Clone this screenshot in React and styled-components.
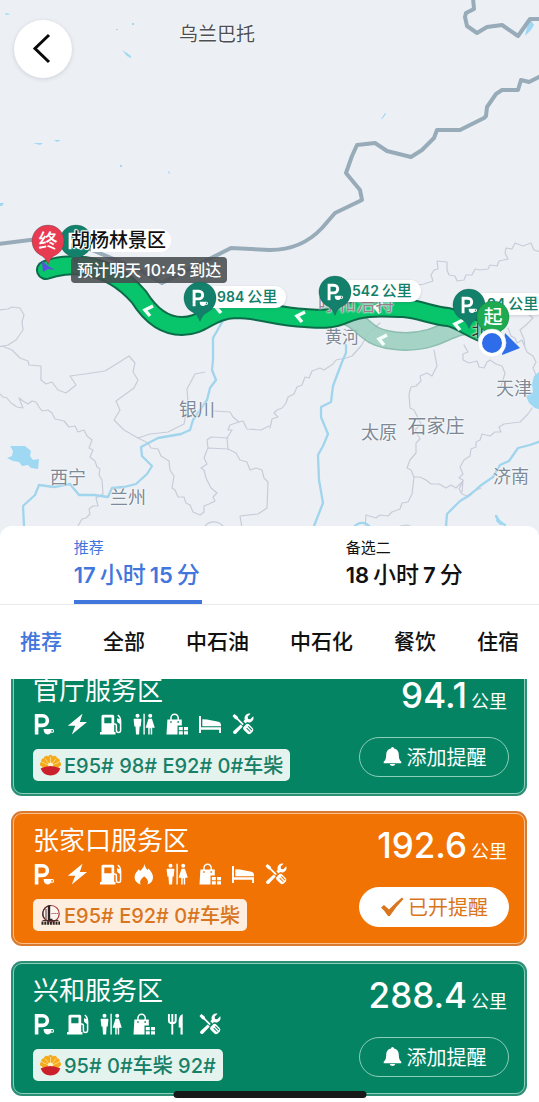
import React, { useLayoutEffect, useRef, useState } from 'react';
import styled, { createGlobalStyle, css } from 'styled-components';

const GlobalStyle = createGlobalStyle`
*, *::before, *::after {
  box-sizing: border-box;
}
body {
  margin: 0;
  background: #fff;
  font-family: Inter, "Noto Sans CJK SC", sans-serif;
  color: #111;
}
button {
  font: inherit;
  color: inherit;
  background: none;
  border: 0;
  padding: 0;
  cursor: pointer;
}
`

const Page = styled.main`
display: flex;
flex-direction: column;
height: 100vh;
overflow: hidden;
`

/* ---------- map ---------- */

const MapArea = styled.section`
position: relative;
flex: 0 0 49vh;
overflow: hidden;
background: #ecf0f4;
`
const MapLayer = styled.svg`
position: absolute;
left: 0;
top: 0;
width: 539px;
height: 540px;
fill: none;
stroke-linecap: round;
stroke-linejoin: round;
`
const BackButton = styled.button`
position: absolute;
left: 14px;
top: 20px;
display: grid;
place-items: center;
width: 58px;
height: 58px;
border-radius: 50%;
background: #fff;
box-shadow: 0 1px 4px rgba(60, 70, 90, .18);
`
const Place = styled.span`
position: absolute;
left: ${(props) => props.$x}px;
top: ${(props) => props.$y}px;
transform: translate(-50%, -50%);
font-size: ${(props) => props.$size || 18}px;
line-height: 1;
white-space: nowrap;
color: ${(props) => props.$color || '#7d8996'};
text-shadow: 0 0 2px #fff, 0 0 2px #fff;
`
const Pin = styled.svg`
position: absolute;
left: ${(props) => props.$x - 17}px;
top: ${(props) => props.$y - 17}px;
width: 34px;
height: 42px;
`
const PinText = styled.text`
font-size: 19px;
font-weight: 500;
fill: #fff;
text-anchor: middle;
`
const DistancePill = styled.span`
position: absolute;
left: ${(props) => props.$x}px;
top: ${(props) => props.$y}px;
height: 22px;
padding: 0 9px 0 17px;
border-radius: 11px;
background: #fff;
box-shadow: 0 1px 3px rgba(60, 70, 90, .2);
color: #12806a;
font-size: 15px;
font-weight: 500;
line-height: 22px;
white-space: nowrap;
b {
  margin-right: 3px;
  font-size: 14px;
  font-weight: 600;
}
`
const Destination = styled.span`
position: absolute;
left: 71px;
top: 229px;
padding-right: 5px;
border-radius: 0 11px 11px 0;
background: linear-gradient(90deg, transparent 20px, #fff 20px);
color: #111;
font-size: 19px;
font-weight: 500;
line-height: 23px;
white-space: nowrap;
text-shadow: 1px 0 #fff, -1px 0 #fff, 0 1px #fff, 0 -1px #fff, 1px 1px 1px #fff, -1px -1px 1px #fff;
`
const Arrival = styled.span`
position: absolute;
left: 71px;
top: 257px;
padding: 0 6px;
border-radius: 4px;
background: rgba(72, 76, 80, .88);
color: #fff;
font-size: 16px;
font-weight: 500;
line-height: 26px;
white-space: nowrap;
b {
  margin: 0 3px;
  font-weight: 500;
}
`

const BORDERS = [
  'M473-2 474 9 466 13 465 17 467 26 477 33 487 27 502 25 518 36 530 19 541 19',
  'M541 76 529 82 521 80 518 90 502 90 496 94 487 107 486 116 484 118 460 130 437 130 434 138 422 150 411 157 387 151 375 143 357 145 352 156 346 173 360 190 362 200 335 213 322 228C308 243 292 250 270 250L231 248 162 283 140 270 80 245 48 239 30 240-2 244',
]

const PROVINCES = [
  'M-2 310 8 309 12 307 20 308 24 315 22 322 23 330 16 340 8 345-2 347M2 346 12 350 20 358 28 361 29 365 41 366 41 380 46 384 52 382 58 390 66 393 76 385 70 376 85 374 105 371 118 363 129 356 135 363 133 372 138 380 134 388 116 401 120 410 114 420 124 430 138 438 150 434 168 432 184 424 188 402 187 389 195 374 205 372',
  'M-2 392 3 397 7 398 11 403 17 407 23 408 21 403 19 398 23 401 28 404 32 401 36 402 39 407 42 411 48 410 52 413 55 419 64 421 69 427 75 426 78 432 84 430 87 436 92 440 89 448 93 450 90 457 95 461 97 467 100 469 99 475 102 480 103 494 96 498 98 506 93 506 89 509 90 514 86 518 82 519 78 526',
  'M138 438 148 443 151 448 158 449 161 456 169 461 170 470 174 476 172 488 175 490 178 497 184 497 186 503 190 505 193 512 200 515 204 512 204 506 209 504 215 501 213 497 217 493 211 488 206 478 204 470 201 468 207 464 204 458 207 450 208 448 228 449 227 438 232 430 228 430 230 425 239 422',
  'M214 411 230 412 233 417 239 422 243 421 247 429 261 430 269 426M208 448 207 440 211 437 228 438M228 449 236 453 240 460 247 462 250 470 256 468 262 470 264 478 268 482 267 508 258 514 240 516 242 528',
  'M270 428 272 419 278 417 274 413 277 410 282 408 286 403 288 397 294 394 297 387 302 385 305 377 309 378 312 371 320 368 324 370 333 364 336 360 346 358 352 356 361 346 368 334 380 323',
  'M418 285 424 284 433 281 431 275 434 270 438 269 437 261 447 262 447 270 449 275 455 276 457 281 464 280 466 275 472 275 475 269 480 270 488 269 490 265 497 266 499 261 508 259 505 253 506 248 512 249 515 243 523 246 531 243 534 250 541 252',
  'M434 350 437 366 432 376 427 373 420 376 421 381 416 386 411 387 409 394 410 408 414 410 417 416 421 424 415 430 420 439 416 443 416 453 410 460 407 468 411 470 414 477 420 477 426 480 431 484 439 484 446 488 451 485 456 488 463 481 459 489 462 494 467 496 474 491 481 488',
  'M464 345 468 352 463 354 463 360 469 363 477 361 479 367 484 368 487 362 490 360 496 364 502 366 505 373 503 380 501 386',
  'M508 328 511 336 515 338 517 343 522 340 527 352 533 356 536 362 533 368 536 375M525 348 524 339 520 330 526 325 533 318 528 314 530 306 537 296',
  'M414 477 412 494 408 502 402 503 400 509 392 512 388 516 380 515 376 518 366 515 365 528',
  'M532 408 528 414 520 422 504 424 499 427 501 432 495 432 490 436 482 434 480 440 476 442 476 447 471 449 470 456 464 460 460 467 463 474 459 478 463 480 462 492',
  'M205 526C210 520 218 521 223 526M400 526 407 525 410 526',
]

const RIVERS = [
  'M225 317 221 324 213 338 213 360 212 370 216 380 210 388 207 400 200 410 193 420 190 430 181 434 158 438 141 447 142 456 152 466 147 474 136 484 124 487 112 488 108 497 94 495 79 495 70 484 54 487 39 485 35 495 23 506 24 526',
  'M346 345 346 353 342 362 333 386 331 402 321 407 321 417 328 434 323 446 318 455 319 480 323 503 314 526',
  'M541 441 530 445 518 448 509 461 500 465 493 477 480 486 470 495 460 501 447 514 446 526',
  'M354 527C359 521 366 522 370 527M496 516 499 522 505 525',
]

const ROUTE = 'M46 270C56 266 72 264 84 266 108 269 126 282 139 297 149 313 162 326 182 326 204 326 209 310 236 309 260 309 276 317 305 318 322 319 332 320 345 314 365 305 385 308 403 308 420 309 432 316 448 317 463 320 470 330 492 336'
const ALT_ROUTE = 'M330 312C352 314 360 325 368 331 380 342 410 344 430 338 447 333 454 325 478 324'

const CHEVRONS = [[148, 311], [219, 308], [300, 317], [378, 308], [458, 325], [382, 340]]

const PLACES = [
  { name: '乌兰巴托', x: 217, y: 34, size: 19, color: '#4c4f53' },
  { name: '黄河', x: 342, y: 337, size: 17 },
  { name: '银川', x: 197, y: 410 },
  { name: '西宁', x: 68, y: 478 },
  { name: '兰州', x: 128, y: 498 },
  { name: '太原', x: 379, y: 433 },
  { name: '石家庄', x: 436, y: 426, size: 19 },
  { name: '天津', x: 514, y: 389 },
  { name: '济南', x: 511, y: 477 },
]

const ParkingShape = () => (
  <>
    <path d="M2.600 21.500V2.800h6a4.800 4.800 0 0 1 0 9.600h-6" fill="none" stroke="currentColor" strokeWidth="3.600" strokeLinecap="butt" strokeLinejoin="miter" />
    <path fillRule="evenodd" d="M9.600 16h8.600a1.900 1.900 0 0 1 0 3.800h-1.400q-1 1.600-3 1.600-4.200 0-4.200-5.400zM17.400 17v1.800h.7a.9.9 0 0 0 0-1.800z" fill="currentColor" />
  </>
)

const MapPin = ({ x, y, color, text }) => (
  <Pin viewBox="0 0 34 42" $x={x} $y={y}>
    <path d="M17 1a16 16 0 0 1 8 29.900c-4 2-6 4.200-8 9.600-2-5.400-4-7.600-8-9.600A16 16 0 0 1 17 1z" fill={color} stroke="rgba(20, 90, 75, .3)" />
    {text
      ? <PinText x="17" y="24">{text}</PinText>
      : <g color="#fff" transform="translate(9 8) scale(.8)"><ParkingShape /></g>}
  </Pin>
)

const RouteMap = () => (
  <MapArea aria-label="路线地图">
    <MapLayer viewBox="0 0 539 540">
      <g stroke="#c8ccd9" strokeWidth="1.200">
        {PROVINCES.map((d) => <path key={d} d={d} />)}
      </g>
      <g stroke="#a1d4ed" strokeWidth="2.300">
        {RIVERS.map((d) => <path key={d} d={d} />)}
      </g>
      <g fill="#9fd8f3">
        <path d="M10 446h15l6 5-1 5 3 4 6-1-1 10-7-1-3-3-6 1-3-4-6-1-6-3 5-2 1-5z" />
        <path d="M541 370l-7 6-2 8 1 8-7 4 3 7 6 5 6 2z" />
        <path d="M527 27l4-7 3 5-3 5-6 6z" />
        <path d="M122 50l5 3 4 3v2l-4-2zM5 13l6 1-5 1zM33 143h10l-3 2zM54 140h7l-4 2zM0 203h4l-2 3H0zM132 23h2v2h-2zM116 29h2v1h-2zM120 165h2v2h-2zM168 171h1l1 3h-1zM381 119l4-6 1 1-4 5zM497 515l3 5 5 4-5 1-4-4z" />
      </g>
      <g stroke="#98abb9" strokeWidth="4">
        {BORDERS.map((d) => <path key={d} d={d} />)}
      </g>
    </MapLayer>
    {PLACES.map((p) => (
      <Place key={p.name} $x={p.x} $y={p.y} $size={p.size} $color={p.color}>{p.name}</Place>
    ))}
    <MapLayer viewBox="0 0 539 540">
      <g opacity=".9">
        <path d={ALT_ROUTE} stroke="#83b9a8" strokeWidth="19" />
        <path d={ALT_ROUTE} stroke="#9ed0c1" strokeWidth="16" />
      </g>
      <path d={ROUTE} stroke="#0d6b49" strokeWidth="20" />
      <path d={ROUTE} stroke="#08c56c" strokeWidth="16" />
      <path d="M42 261l6 5 7 4-7-1-5 3z" fill="#5a50e0" />
      {CHEVRONS.map(([x, y]) => (
        <path key={x} d={`M${x + 5} ${y - 5}l-8 4 5 6`} stroke="#f4fff9" strokeWidth="3.500" strokeLinecap="butt" strokeLinejoin="miter" />
      ))}
    </MapLayer>
    <Place $x={356} $y={304} $size={19} $color="#9a7f8b">呼和浩特</Place>
    <MapPin x={76} y={241} color="#12806a" />
    <Destination>胡杨林景区</Destination>
    <Arrival>预计明天<b>10:45</b>到达</Arrival>
    <MapPin x={48} y={241} color="#e83a51" text="终" />
    <DistancePill $x={200} $y={286}><b>984</b>公里</DistancePill>
    <MapPin x={200} y={298} color="#12806a" />
    <DistancePill $x={335} $y={280}><b>542</b>公里</DistancePill>
    <MapPin x={335} y={292} color="#12806a" />
    <Place $x={480} $y={331} $size={17} $color="#333">北</Place>
    <DistancePill $x={470} $y={293}><b>94</b>公里</DistancePill>
    <MapPin x={469} y={305} color="#12806a" />
    <MapPin x={493} y={317} color="#1eaa50" text="起" />
    <MapLayer viewBox="0 0 539 540">
      <path d="M505 333l15 15-18 7z" fill="#2f6fe8" />
      <circle cx="492" cy="343" r="14" fill="#fff" stroke="#d8dfe6" strokeWidth=".5" />
      <circle cx="492" cy="343" r="10" fill="#2e6cea" />
    </MapLayer>
    <BackButton type="button" aria-label="返回">
      <svg width="58" height="58" viewBox="0 0 58 58" fill="none" stroke="#0a0a0a" strokeWidth="3">
        <path d="M35 15 21 28.500 35 42" />
      </svg>
    </BackButton>
  </MapArea>
)

/* ---------- sheet ---------- */

const Sheet = styled.section`
position: relative;
display: flex;
flex: 1;
flex-direction: column;
min-height: 0;
margin-top: -14px;
border-radius: 12px 12px 0 0;
background: #fff;
`
const RouteTabs = styled.div`
display: grid;
grid-template-columns: 1fr 1fr;
justify-items: center;
padding-left: 4px;
border-bottom: 1px solid #e9eaec;
`
const RouteTab = styled.button`
display: flex;
flex-direction: column;
height: 78px;
padding-top: 12px;
border-bottom: 4px solid ${(props) => (props.$active ? '#4176dc' : 'transparent')};
color: ${(props) => (props.$active ? '#4176dc' : '#111')};
text-align: left;
`
const RouteName = styled.span`
font-size: 15px;
line-height: 20px;
`
const RouteTime = styled.span`
padding-right: 2px;
font-size: 23px;
font-weight: 500;
line-height: 34px;
b {
  font-size: 22px;
  font-weight: 600;
}
b + span {
  margin: 0 4px;
}
b + span:last-child {
  margin-right: 0;
}
`
const Filters = styled.nav`
display: flex;
justify-content: space-between;
padding: 0 20px;
`
const Filter = styled.button`
font-size: 21px;
font-weight: 500;
line-height: 74px;
white-space: nowrap;
color: ${(props) => (props.$active ? '#4176dc' : '#111')};
`
const List = styled.ul`
display: flex;
flex: 1;
flex-direction: column;
gap: 15px;
min-height: 0;
margin: 0;
padding: 0 12px 7px 11px;
overflow-y: auto;
list-style: none;
scrollbar-width: none;
`
const themes = {
  green: css`
  --main: #058463;
  --edge: #2b8f76;
  --line: #8bceb9;
  --badge: #e5f3ef;
  --badge-text: #178066;
  `,
  orange: css`
  --main: #f07304;
  --edge: #d87a30;
  --line: #fbc18c;
  --badge: #fdeee0;
  --badge-text: #d9761d;
  `,
}
const Card = styled.li`
${(props) => themes[props.$tone]}
flex: none;
padding: 2px;
border-radius: 11px;
background: var(--edge);
`
const CardBody = styled.div`
display: flex;
justify-content: space-between;
height: 131px;
padding: 8px 15px 0 19px;
border: 1px solid var(--line);
border-radius: 9px;
background: var(--main);
color: #fff;
`
const Info = styled.div`
display: flex;
flex-direction: column;
align-items: flex-start;
`
const Title = styled.h2`
margin: 0;
font-size: 26px;
font-weight: 400;
line-height: 37px;
`
const Icons = styled.div`
display: flex;
gap: 11px;
margin-top: 4px;
padding-left: 1px;
svg {
  width: 22px;
  height: 22px;
}
`
const Fuel = styled.p`
display: flex;
align-items: center;
gap: 3px;
height: 32px;
margin: 14px 0 0;
padding: 0 7px;
border-radius: 5px;
background: var(--badge);
color: var(--badge-text);
font-size: 20px;
font-weight: 500;
white-space: nowrap;
svg {
  width: 21px;
  height: 22px;
}
`
const Side = styled.div`
display: flex;
flex-direction: column;
align-items: flex-end;
justify-content: space-between;
height: 105px;
`
const Distance = styled.p`
display: flex;
align-items: baseline;
gap: 4px;
margin: 0;
padding-right: 2px;
font-size: 18px;
line-height: 46px;
b {
  font-size: 35px;
  font-weight: 500;
}
`
const Remind = styled.button`
display: flex;
align-items: center;
justify-content: center;
gap: 4px;
width: 150px;
height: 40px;
border: 1px solid ${(props) => (props.$on ? '#fff' : 'var(--line)')};
border-radius: 20px;
background: ${(props) => (props.$on ? '#fff' : 'transparent')};
color: ${(props) => (props.$on ? 'var(--badge-text)' : '#fff')};
font-size: 20px;
`
const HomeBar = styled.div`
position: fixed;
left: 50%;
bottom: 4px;
width: 193px;
height: 7px;
border-radius: 4px;
background: #171a19;
transform: translateX(-50%);
`

const Icon = ({ children }) => (
  <svg viewBox="0 0 22 22" fill="currentColor" aria-hidden="true">{children}</svg>
)

const icons = {
  parking: <Icon><ParkingShape /></Icon>,
  charge: <Icon><path d="M15.500.800.800 12.700h7.400l-3.400 8.800L20 9h-7.200z" /></Icon>,
  fuel: (
    <Icon>
      <path fillRule="evenodd" d="M3 1.800h9.700q1.500 0 1.500 1.500V19h1.300v2.500H0V19h1.500V3.300Q1.500 1.800 3 1.800zM4.300 4.500v5.800h7.200V4.500z" />
      <path d="M14 11h.8q1.600 0 1.600 1.600v4.600c0 3 4.200 3 4.200 0V8.200c0-2.600-.8-4.700-2.800-6.200" fill="none" stroke="currentColor" strokeWidth="1.500" />
      <path d="M17 5.200l4 1.300v5l-2.600-1.400q-1.400-.8-1.400-2z" />
    </Icon>
  ),
  fire: (
    <Icon>
      <path d="M11.600.8c.4 3 1.400 4.600 3 6.200l1-1.600c2.500 3.200 4.400 5.500 4.400 8.800 0 3.800-2.500 6.300-5.600 7.200 1.400-2.700.6-4.800-3.200-8.200-3.900 3.400-4.800 5.500-3.400 8.200C4.200 20.500 1.600 18 1.600 14.300c0-3.500 2.300-5.600 4.200-8l1.300 1.700C9.700 5.900 11.300 3.600 11.600.8z" />
    </Icon>
  ),
  toilet: (
    <Icon>
      <circle cx="4.500" cy="2.800" r="2" />
      <path d="M1.300 5.800h6.400q.7 0 .7.800l-.7 6.800-1.100.2-.5 7.900H3l-.5-7.900-1.100-.2-.8-6.800q0-.8.700-.8z" />
      <path d="M10.400.8h1.400v20.700h-1.400z" />
      <circle cx="17.200" cy="2.800" r="2" />
      <path d="M15.500 5.800h3.400l2.900 9h-2.600v6.700h-1.500v-6.200h-1v6.200h-1.500v-6.700h-2.600z" />
    </Icon>
  ),
  shop: (
    <Icon>
      <path d="M5 7V4.800a3.600 3.600 0 0 1 7.200 0V7" fill="none" stroke="currentColor" strokeWidth="1.500" />
      <path fillRule="evenodd" d="M1.400 6.500h14.400v6h-4.300v9H.5zM4.200 8.200v1.500h1.500V8.200zm7.200 0v1.500H13V8.200z" />
      <path d="M12.800 14h4v3.200h-4zM18 14h4v3.200h-4zM12.800 18.300h4v3.200h-4zM18 18.300h4v3.200h-4z" />
    </Icon>
  ),
  bed: (
    <Icon>
      <path d="M0 3h2v11.200h20V20h-1.900v-3.300H2V20H0z" />
      <path d="M3.300 6.200 8 6.500l11.500 2.300q2.500.6 2.500 3v1.400H3.300z" />
    </Icon>
  ),
  food: (
    <Icon>
      <path d="M2.900 1v6.500q0 2.800 3.400 2.800t3.400-2.800V1M6.300 1v20.500" fill="none" stroke="currentColor" strokeWidth="1.900" />
      <path d="M16.700.9v20.600h-2.200v-7h-1.800V7.500q.3-5.200 4-6.600z" />
    </Icon>
  ),
  repair: (
    <Icon>
      <path d="M.5 3 2.400 1.100l3.200 2.300.7 2 5.500 5.500-1.300 1.300L5 6.700l-2-.7z" />
      <path fillRule="evenodd" d="M11.300 14.200l3.200-3.100q1.500-.7 2.700.5l3.600 3.600q1.200 1.500 0 3.400l-2 2q-1.900 1.200-3.400 0l-3.600-3.600q-1.200-1.300-.5-2.800zM14.300 15.500l3.600 3.600.7-.7-3.600-3.600zM16 13.800l3.600 3.600.7-.7-3.600-3.600z" />
      <path d="M18.600.7 15.700 3.600l.3 2.300 2.300.3 2.900-2.900c1 2.600-.3 5.200-2.700 6-1.400.4-2.500.2-3.400-.2l-1.500 1.500-2.300-2.300 1.500-1.500c-1.300-3.400 1.900-7.300 5.800-6.100zM8.700 11.500l2.100 2.100-6.600 6.800q-1.300 1.100-2.600.1-1.100-1.300 0-2.600z" />
    </Icon>
  ),
}

const PetroChina = () => (
  <svg viewBox="0 0 21 22" aria-hidden="true">
    <circle cx="10.500" cy="11" r="8.700" fill="#f5a91c" />
    {[-80, -55, -30, 0, 30, 55, 80].map((a) => (
      <ellipse key={a} cx="10.500" cy="3.300" rx="2.400" ry="2.500" fill="#f5a91c" transform={`rotate(${a} 10.500 11.500)`} />
    ))}
    <path d="M10.500 12V3M10.500 12 5 4.500M10.500 12 16 4.500M10.500 12 2 8M10.500 12 19 8" stroke="#fde9a0" strokeWidth=".7" />
    <circle cx="10.500" cy="11" r="2.500" fill="#fff3c4" />
    <path d="M.6 14.500Q10.500 9.500 20.400 14.500 17.500 21.500 10.500 21.500T.6 14.500z" fill="#cb1f2b" />
  </svg>
)

const Sinopec = () => (
  <svg viewBox="0 0 21 22" aria-hidden="true">
    <circle cx="11" cy="9.700" r="8.200" fill="#fff6f0" stroke="#a8383c" strokeWidth="1.200" />
    <path d="M11 1.500a8.200 8.200 0 0 0-6.500 13.200" fill="none" stroke="#44302e" strokeWidth="1.200" />
    <path d="M6 5v11M2.500 16.500h16" stroke="#44302e" strokeWidth="1" />
    <path d="M7.800 1.800h2.400v13h2.300v1.700H7.800z" fill="#2e2423" />
    <path d="M11.500 9.500h6.500" stroke="#b05a58" strokeWidth="1.200" strokeDasharray="1.300 .5" />
    <path d="M1.500 19.200h18.500" stroke="#2e2423" strokeWidth="3.200" strokeDasharray="2 .8" />
  </svg>
)

const BellIcon = () => (
  <svg width="21" height="21" viewBox="0 0 21 21" fill="currentColor" aria-hidden="true">
    <path d="M10.500 1q1.400 0 1.600 1.500c3.200.8 4.700 3.100 4.700 6.300 0 3.600.7 5.300 2.500 6.900v1.500H1.700v-1.500c1.800-1.600 2.500-3.300 2.500-6.900 0-3.200 1.500-5.500 4.700-6.300Q9.100 1 10.500 1zM7.700 18h5.600q-.5 2-2.800 2t-2.800-2z" />
  </svg>
)

const CheckIcon = () => (
  <svg width="24" height="22" viewBox="0 0 24 22" fill="currentColor" aria-hidden="true">
    <path d="M1 11.500 4 9l5 4.500Q15 7 22 1.500L23.500 3Q16 10.500 9.800 20H8Q5 15 1 11.500z" />
  </svg>
)

const ROUTES = [
  { name: '推荐', hours: 17, minutes: 15 },
  { name: '备选二', hours: 18, minutes: 7 },
]
const FILTERS = ['推荐', '全部', '中石油', '中石化', '餐饮', '住宿']
const STATIONS = [
  { name: '官厅服务区', km: '94.1', brand: 'petro', fuel: 'E95# 98# E92# 0#车柴', has: ['parking', 'charge', 'fuel', 'toilet', 'shop', 'bed', 'repair'] },
  { name: '张家口服务区', km: '192.6', brand: 'sinopec', fuel: 'E95# E92# 0#车柴', has: ['parking', 'charge', 'fuel', 'fire', 'toilet', 'shop', 'bed', 'repair'] },
  { name: '兴和服务区', km: '288.4', brand: 'petro', fuel: '95# 0#车柴 92#', has: ['parking', 'fuel', 'toilet', 'shop', 'food', 'repair'] },
]

const Station = ({ station, reminded, onToggle }) => (
  <Card $tone={reminded ? 'orange' : 'green'}>
    <CardBody>
      <Info>
        <Title>{station.name}</Title>
        <Icons>
          {station.has.map((key) => <React.Fragment key={key}>{icons[key]}</React.Fragment>)}
        </Icons>
        <Fuel>
          {station.brand === 'petro' ? <PetroChina /> : <Sinopec />}
          {station.fuel}
        </Fuel>
      </Info>
      <Side>
        <Distance><b>{station.km}</b>公里</Distance>
        <Remind type="button" $on={reminded} aria-pressed={reminded} onClick={onToggle}>
          {reminded ? <CheckIcon /> : <BellIcon />}
          {reminded ? '已开提醒' : '添加提醒'}
        </Remind>
      </Side>
    </CardBody>
  </Card>
)

const App = () => {
  const [route, setRoute] = useState(0)
  const [filter, setFilter] = useState('推荐')
  const [reminders, setReminders] = useState(['张家口服务区'])
  const list = useRef(null)

  useLayoutEffect(() => {
    list.current.scrollTop = 18
  }, [])

  const toggle = (name) => setReminders((all) => (
    all.includes(name) ? all.filter((n) => n !== name) : [...all, name]
  ))

  return (
    <Page>
      <GlobalStyle />
      <RouteMap />
      <Sheet>
        <RouteTabs>
          {ROUTES.map((r, i) => (
            <RouteTab key={r.name} type="button" $active={i === route} onClick={() => setRoute(i)}>
              <RouteName>{r.name}</RouteName>
              <RouteTime>
                <b>{r.hours}</b><span>小时</span><b>{r.minutes}</b><span>分</span>
              </RouteTime>
            </RouteTab>
          ))}
        </RouteTabs>
        <Filters>
          {FILTERS.map((f) => (
            <Filter key={f} type="button" $active={f === filter} onClick={() => setFilter(f)}>{f}</Filter>
          ))}
        </Filters>
        <List ref={list}>
          {STATIONS.map((s) => (
            <Station key={s.name} station={s} reminded={reminders.includes(s.name)} onToggle={() => toggle(s.name)} />
          ))}
        </List>
      </Sheet>
      <HomeBar />
    </Page>
  )
}

export default App
